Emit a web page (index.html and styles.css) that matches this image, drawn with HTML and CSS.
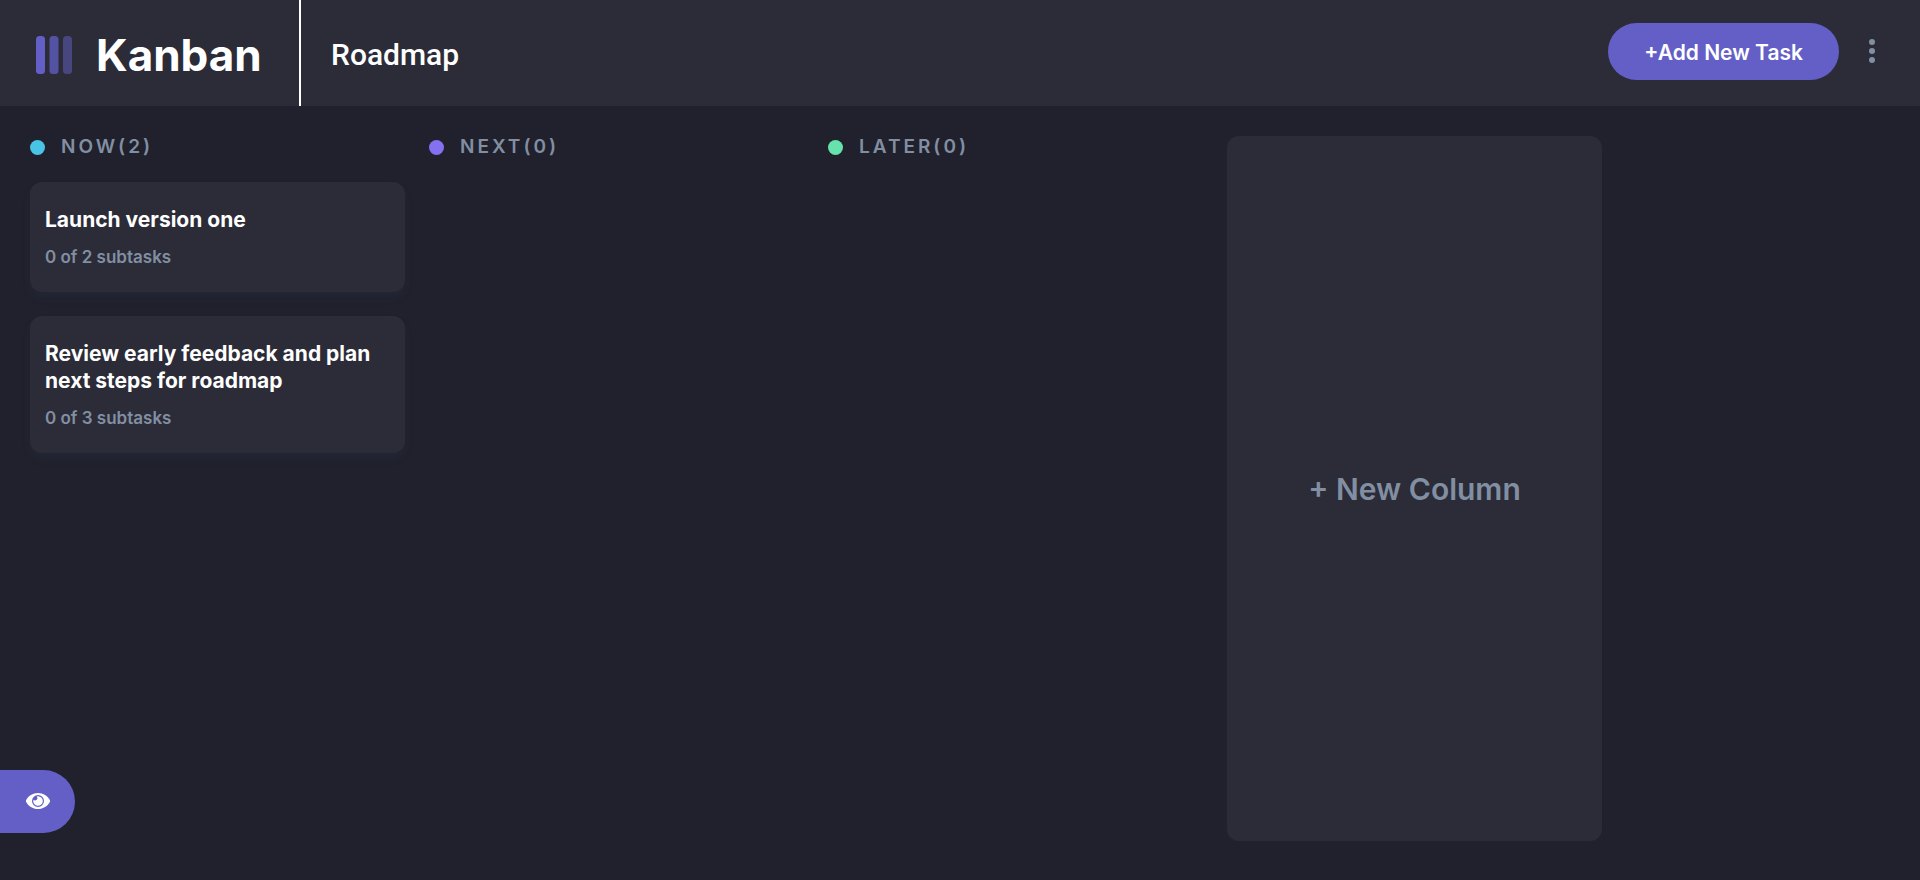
FILE: index.html
```html
<!DOCTYPE html>
<html lang="en">
<head>
<meta charset="utf-8">
<title>Kanban</title>
<link rel="stylesheet" href="styles.css">
</head>
<body>
<header class="topbar">
  <div class="brand">
    <svg class="brand-mark" viewBox="0 0 36 38" aria-hidden="true">
      <rect width="9" height="38" rx="3.500" fill="#635fc7"/>
      <rect x="13.5" width="9" height="38" rx="3.500" fill="#635fc7" opacity=".75"/>
      <rect x="27" width="9" height="38" rx="3.500" fill="#635fc7" opacity=".5"/>
    </svg>
    <span class="brand-name">Kanban</span>
  </div>
  <h1 class="board-name">Roadmap</h1>
  <div class="actions">
    <button class="add-task" type="button">+Add New Task</button>
    <button class="menu" type="button" aria-label="Board menu">
      <svg class="menu-icon" viewBox="0 0 6 24" aria-hidden="true">
        <g fill="#828fa3"><circle cx="3" cy="3" r="3"/><circle cx="3" cy="12" r="3"/><circle cx="3" cy="21" r="3"/></g>
      </svg>
    </button>
  </div>
</header>
<main class="board">
  <section class="column">
    <h2 class="column-title"><span class="dot dot-now"></span>NOW(2)</h2>
    <article class="card">
      <h3 class="card-title">Launch version one</h3>
      <p class="card-meta">0 of 2 subtasks</p>
    </article>
    <article class="card">
      <h3 class="card-title">Review early feedback and plan next steps for roadmap</h3>
      <p class="card-meta">0 of 3 subtasks</p>
    </article>
  </section>
  <section class="column">
    <h2 class="column-title"><span class="dot dot-next"></span>NEXT(0)</h2>
  </section>
  <section class="column">
    <h2 class="column-title"><span class="dot dot-later"></span>LATER(0)</h2>
  </section>
  <button class="new-column" type="button">+ New Column</button>
</main>
<button class="show-sidebar" type="button" aria-label="Show sidebar">
  <svg class="eye" viewBox="0 0 24 16" aria-hidden="true">
    <path fill="#fff" fill-rule="evenodd" d="M12 0C6.800 0 2.200 3 0 7.300a1.500 1.500 0 0 0 0 1.400C2.200 13 6.800 16 12 16s9.800-3 12-7.300a1.500 1.500 0 0 0 0-1.400C21.800 3 17.200 0 12 0Zm0 14a6 6 0 1 1 0-12 6 6 0 0 1 0 12Z"/>
    <path fill="#fff" d="M12 3.200a4.800 4.800 0 1 1-4.600 3.500 2.100 2.100 0 0 0 3.300-3.300A4.500 4.500 0 0 1 12 3.200Z"/>
  </svg>
</button>
</body>
</html>
```

FILE: styles.css
```css
* { box-sizing: border-box; }

body {
  margin: 0;
  min-height: 100vh;
  display: flex;
  flex-direction: column;
  background: #20212c;
  color: #fff;
  font-family: Inter, "Liberation Sans", sans-serif;
}

h1, h2, h3, p { margin: 0; }

button {
  border: 0;
  padding: 0;
  color: inherit;
  font: inherit;
  cursor: pointer;
}

.topbar {
  display: flex;
  align-items: stretch;
  min-height: 106px;
  background: #2b2c37;
}

.brand {
  display: flex;
  align-items: center;
  gap: 24px;
  width: 301px;
  padding: 4px 0 0 36px;
  border-right: 2px solid #fff;
}

.brand-mark { width: 36px; height: 38px; }

.brand-name {
  font-size: 44px;
  line-height: 56px;
  font-weight: 700;
}

.board-name {
  align-self: center;
  padding: 4px 0 0 30px;
  font-family: Roboto, sans-serif;
  font-size: 30px;
  line-height: 36px;
  font-weight: 500;
}

.actions {
  display: flex;
  align-items: center;
  gap: 30px;
  margin-left: auto;
  padding: 0 45px 4px 0;
}

.add-task {
  padding: 16px 36px 14px;
  border-radius: 30px;
  background: #635fc7;
  font-size: 21px;
  line-height: 27px;
  font-weight: 600;
}

.menu { display: flex; background: none; }
.menu-icon { width: 6px; height: 24px; }

.board {
  flex: 1;
  display: flex;
  gap: 24px;
  padding: 30px 30px 39px;
}

.column {
  display: flex;
  flex-direction: column;
  gap: 24px;
  flex: 0 0 375px;
}

.column-title {
  display: flex;
  align-items: center;
  gap: 16px;
  color: #828fa3;
  font-size: 19px;
  line-height: 22px;
  font-weight: 600;
  letter-spacing: 3px;
}

.dot { width: 15px; height: 15px; border-radius: 50%; }
.dot-now { background: #49c4e5; }
.dot-next { background: #8471f2; }
.dot-later { background: #67e2ae; }

.card {
  padding: 24px 15px 23px;
  border-radius: 12px;
  background: #2b2c37;
  box-shadow: 0 6px 9px rgba(54, 78, 126, .1);
}

.card-title {
  font-size: 21px;
  line-height: 27px;
  font-weight: 700;
}

.card-meta {
  margin-top: 12px;
  color: #828fa3;
  font-size: 17px;
  line-height: 24px;
  font-weight: 600;
}

.new-column {
  flex: 0 0 375px;
  border-radius: 12px;
  background: #2b2c37;
  color: #828fa3;
  font-size: 30px;
  line-height: 38px;
  font-weight: 600;
}

.show-sidebar {
  position: fixed;
  left: 0;
  bottom: 47px;
  padding: 23px 25px 24px 26px;
  display: flex;
  border-radius: 0 32px 32px 0;
  background: #635fc7;
}

.eye { width: 24px; height: 16px; }
```
